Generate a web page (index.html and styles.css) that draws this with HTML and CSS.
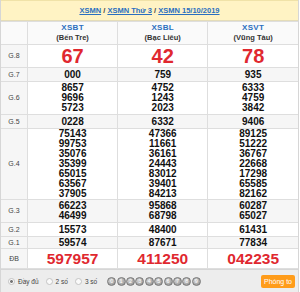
FILE: index.html
```html
<!DOCTYPE html>
<html lang="vi">
<head>
    <meta charset="UTF-8">
    <title>XSMN 15/10/2019</title>
    <link rel="stylesheet" href="styles.css">
</head>
<body>
    <div class="box">
        <div class="title-bar">
            <a href="#">XSMN</a> / <a href="#">XSMN Thứ 3</a> / <a href="#">XSMN 15/10/2019</a>
        </div>

        <table class="result">
            <thead>
                <tr>
                    <th class="lbl"></th>
                    <th><a href="#">XSBT</a><span>(Bến Tre)</span></th>
                    <th><a href="#">XSBL</a><span>(Bạc Liêu)</span></th>
                    <th><a href="#">XSVT</a><span>(Vũng Tàu)</span></th>
                </tr>
            </thead>
            <tbody>
                <tr class="g8">
                    <td class="lbl">G.8</td>
                    <td class="big">67</td><td class="big">42</td><td class="big">78</td>
                </tr>
                <tr class="alt one">
                    <td class="lbl">G.7</td>
                    <td>000</td><td>759</td><td>935</td>
                </tr>
                <tr class="g6">
                    <td class="lbl">G.6</td>
                    <td>8657<br>9696<br>5723</td>
                    <td>4752<br>1243<br>2023</td>
                    <td>6333<br>4759<br>3842</td>
                </tr>
                <tr class="alt one">
                    <td class="lbl">G.5</td>
                    <td>0228</td><td>6332</td><td>9406</td>
                </tr>
                <tr>
                    <td class="lbl">G.4</td>
                    <td>75143<br>99753<br>35076<br>35399<br>65015<br>63567<br>37905</td>
                    <td>47366<br>11661<br>36161<br>24443<br>83012<br>39401<br>84213</td>
                    <td>89125<br>51222<br>36767<br>22668<br>17298<br>65585<br>82162</td>
                </tr>
                <tr class="alt g3">
                    <td class="lbl">G.3</td>
                    <td>66223<br>46499</td>
                    <td>95868<br>68798</td>
                    <td>60287<br>65027</td>
                </tr>
                <tr class="one">
                    <td class="lbl">G.2</td>
                    <td>15573</td><td>48400</td><td>61431</td>
                </tr>
                <tr class="alt g1">
                    <td class="lbl">G.1</td>
                    <td>59574</td><td>87671</td><td>77834</td>
                </tr>
                <tr class="db">
                    <td class="lbl">ĐB</td>
                    <td class="big">597957</td><td class="big">411250</td><td class="big">042235</td>
                </tr>
            </tbody>
        </table>

        <div class="tools">
            <label class="opt"><span class="radio on"></span>Đầy đủ</label>
            <label class="opt"><span class="radio"></span>2 số</label>
            <label class="opt"><span class="radio"></span>3 số</label>
            <div class="balls">
                <span>0</span><span>1</span><span>2</span><span>3</span><span>4</span>
                <span>5</span><span>6</span><span>7</span><span>8</span><span>9</span>
            </div>
            <button class="zoom-btn">Phóng to</button>
        </div>
    </div>
</body>
</html>
```

FILE: styles.css
```css
body {
    margin: 0;
    padding: 0;
    font-family: 'Liberation Sans', Arial, sans-serif;
    background: #fff;
}

.box {
    width: 297px;
    border: 1px solid #d6d6d6;
    border-top: none;
}

.title-bar {
    height: 19px;
    line-height: 19px;
    background: #fff3c4;
    border-top: 1px solid #f0e2a8;
    border-bottom: 1px solid #e4dcb8;
    text-align: center;
    font-size: 7.5px;
    font-weight: bold;
    color: #444;
}

.title-bar a {
    color: #2a6fc0;
}

.result {
    width: 100%;
    border-collapse: collapse;
    table-layout: fixed;
}

.result th, .result td {
    border: 1px solid #dedede;
    text-align: center;
    padding: 0;
    font-size: 10px;
    line-height: 10px;
    font-weight: bold;
    color: #111;
}

.result tr > :first-child {
    border-left: none;
    width: 26px;
}

.result tr > :last-child {
    border-right: none;
}

.result th {
    height: 22px;
    font-size: 8px;
    line-height: 10px;
    background: #fafafa;
}

.result th a {
    display: block;
    color: #2a6fc0;
    text-decoration: none;
    letter-spacing: 0.3px;
}

.result th span {
    display: block;
    color: #333;
    font-size: 7.5px;
}

.result td.lbl {
    background: #f6f6f6;
    font-size: 7px;
    font-weight: normal;
    color: #444;
}

.result tr.alt td {
    background: #f6f6f6;
}

.result tr.one td {
    height: 13px;
}

.result tr.g1 td {
    height: 11px;
}

.result tr.g6 td {
    height: 32px;
}

.result tr.g3 td {
    height: 22px;
}

.result td.big {
    color: #e0282f;
}

.result tr.g8 td {
    height: 22px;
}

.result tr.g8 td.big {
    font-size: 20px;
    line-height: 19px;
}

.result tr.db td {
    height: 19px;
}

.result tr.db td.big {
    font-size: 15.5px;
    line-height: 17px;
}

.tools {
    display: flex;
    align-items: center;
    height: 22px;
    padding: 0 3px 0 7px;
    background: #ededed;
    border-top: 1px solid #d6d6d6;
    font-size: 6.5px;
    color: #444;
}

.opt {
    display: flex;
    align-items: center;
    margin-right: 7px;
}

.radio {
    width: 5px;
    height: 5px;
    border: 1px solid #c4c4c4;
    border-radius: 50%;
    background: #fafafa;
    margin-right: 3px;
}

.radio.on {
    background: radial-gradient(circle, #777 35%, #fafafa 45%);
}

.balls {
    display: flex;
    margin-left: 3px;
}

.balls span {
    width: 7px;
    height: 7px;
    margin-right: 0.4px;
    border: 0.5px solid #777;
    border-radius: 50%;
    background: radial-gradient(circle at 35% 35%, #d4d4d4, #8a8a8a);
    color: #fff;
    font-size: 5.5px;
    line-height: 7px;
    text-align: center;
}

.zoom-btn {
    margin-left: auto;
    height: 13px;
    padding: 0 3px;
    border: none;
    border-radius: 2px;
    background: #ff9c1a;
    color: #fff;
    font-family: 'Liberation Sans', Arial, sans-serif;
    font-size: 7px;
}
```
